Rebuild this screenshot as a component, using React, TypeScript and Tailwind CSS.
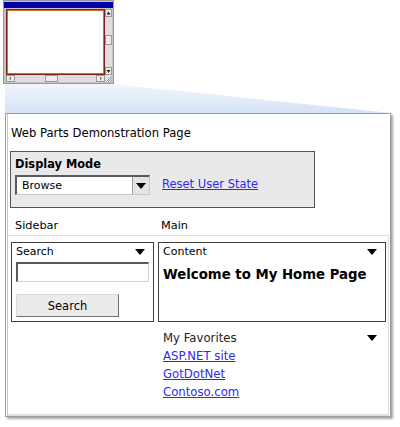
import React from "react";

const font = { fontFamily: '"DejaVu Sans", Verdana, sans-serif' };

const Caret: React.FC = () => (
  <svg width="10" height="6" viewBox="0 0 10 6" className="shrink-0">
    <path d="M0 0h10L5 6z" fill="#000" />
  </svg>
);

const Thumbnail: React.FC = () => (
  <svg width="400" height="113" viewBox="0 0 400 113" className="block">
    <defs>
      <linearGradient id="wedge" x1="0" y1="0" x2="0" y2="1">
        <stop offset="0" stopColor="#f2f6fc" />
        <stop offset="1" stopColor="#d4e2f5" />
      </linearGradient>
    </defs>
    <polygon points="5,84 113,84 391,113 5,113" fill="url(#wedge)" />
    {/* window frame */}
    <rect x="3.5" y="0.5" width="110" height="83" fill="#c4c4c4" stroke="#9a9a9a" />
    <rect x="4" y="2" width="109" height="6" fill="#0000a8" />
    {/* page area */}
    <rect x="6.5" y="9.5" width="98" height="65" fill="#fff" stroke="#7a2410" strokeWidth="1" />
    <rect x="7.5" y="10.5" width="96" height="63" fill="none" stroke="#e0663a" strokeWidth="1" />
    {/* vertical scrollbar */}
    <rect x="105" y="9" width="7" height="66" fill="#dedede" />
    <rect x="105.5" y="9.5" width="6" height="7" fill="#ececec" stroke="#9a9a9a" />
    <path d="M106.5 14.5h4l-2-3z" fill="#222" />
    <rect x="105.5" y="35.5" width="6" height="9" fill="#ececec" stroke="#9a9a9a" />
    <rect x="105.5" y="67.5" width="6" height="7" fill="#ececec" stroke="#9a9a9a" />
    <path d="M106.5 70h4l-2 3z" fill="#222" />
    {/* horizontal scrollbar */}
    <rect x="6" y="75" width="99" height="7" fill="#dedede" />
    <rect x="6.5" y="75.5" width="8" height="6" fill="#ececec" stroke="#9a9a9a" />
    <path d="M9 78.5l2-2v4z" fill="#777" />
    <rect x="45.5" y="75.5" width="12" height="6" fill="#ececec" stroke="#9a9a9a" />
    <rect x="96.5" y="75.5" width="8" height="6" fill="#ececec" stroke="#9a9a9a" />
    <path d="M102 78.5l-2-2v4z" fill="#777" />
    {/* size grip */}
    <rect x="105" y="75" width="7" height="7" fill="#e4e4e4" />
    <path d="M106 82l6-6M108 82l4-4M110 82l2-2" stroke="#8a8a8a" strokeWidth="0.8" />
  </svg>
);

const App: React.FC = () => {
  return (
    <div className="w-[400px] h-[427px] bg-white text-[11px] text-black overflow-hidden" style={font}>
      <Thumbnail />

      <div className="ml-[5px] w-[386px] h-[304px] border border-[#9c9c9c] bg-white shadow-[2px_2px_2px_rgba(0,0,0,0.35)] flex">
        <div className="flex-1 ml-px border-l border-[#c8c8c8] flex flex-col">
          <div className="mt-[12px] ml-[3px] leading-[14px] text-[11.6px]">Web Parts Demonstration Page</div>

          {/* display mode */}
          <div className="mt-[11px] ml-[2px] w-[305px] h-[57px] border border-[#555] bg-[#e9e9ec] px-[4px]">
            <div className="pt-[5px] leading-[14px] font-bold text-[11.4px]">Display Mode</div>
            <div className="mt-[4px] flex items-center gap-[12px]">
              <div className="w-[135px] h-[20px] flex bg-white border-t-2 border-l-2 border-t-[#5a5a5a] border-l-[#5a5a5a] border-b border-r border-b-[#c8c8c8] border-r-[#c8c8c8]">
                <span className="flex-1 pl-[5px] leading-[17px] text-[11px]">Browse</span>
                <span className="w-[17px] bg-[#e4e4e4] border-l border-[#a0a0a0] flex items-center justify-center">
                  <Caret />
                </span>
              </div>
              <a href="#" className="text-[11.5px] text-[#2b2bf0] underline">
                Reset User State
              </a>
            </div>
          </div>

          {/* zone headers */}
          <div className="mt-[11px] flex leading-[14px] text-[11.3px]">
            <span className="ml-[7px] w-[146px]">Sidebar</span>
            <span>Main</span>
          </div>

          {/* zones */}
          <div className="mt-[2px] mr-px flex-1 border-t border-r border-b-2 border-[#e2e1d8] flex items-start pt-[6px]">
            {/* sidebar zone */}
            <div className="ml-[3px] w-[143px] h-[80px] border border-[#404040] pl-[4px] pr-[8px]">
              <div className="mt-[2px] flex items-center justify-between leading-[14px] text-[11px]">
                <span>Search</span>
                <Caret />
              </div>
              <div className="mt-[3px] w-[133px] h-[20px] bg-white border-t-2 border-l-2 border-t-[#5a5a5a] border-l-[#5a5a5a] border-b border-r border-b-[#d0d0d0] border-r-[#d0d0d0]" />
              <button className="mt-[12px] w-[103px] h-[23px] bg-[#ebebeb] border border-t-[#d8d8d8] border-l-[#d8d8d8] border-b-[#707070] border-r-[#707070] text-[11.5px] leading-[20px]" style={font}>
                Search
              </button>
            </div>

            {/* main zone */}
            <div className="ml-[4px] w-[228px] flex flex-col">
              <div className="h-[80px] border border-[#404040] pl-[4px] pr-[8px]">
                <div className="mt-[2px] flex items-center justify-between leading-[14px]">
                  <span>Content</span>
                  <Caret />
                </div>
                <div className="mt-[9px] leading-[14px] font-bold text-[13.3px]">Welcome to My Home Page</div>
              </div>
              <div className="mt-[7px] pl-[5px] pr-[9px] leading-[18px] text-[11.7px]">
                <div className="flex items-center justify-between text-[#222]">
                  <span>My Favorites</span>
                  <Caret />
                </div>
                <div><a href="#" className="text-[#2b2bf0] underline">ASP.NET site</a></div>
                <div><a href="#" className="text-[#2b2bf0] underline">GotDotNet</a></div>
                <div><a href="#" className="text-[#2b2bf0] underline">Contoso.com</a></div>
              </div>
            </div>
          </div>
        </div>
      </div>
    </div>
  );
};

export default App;
